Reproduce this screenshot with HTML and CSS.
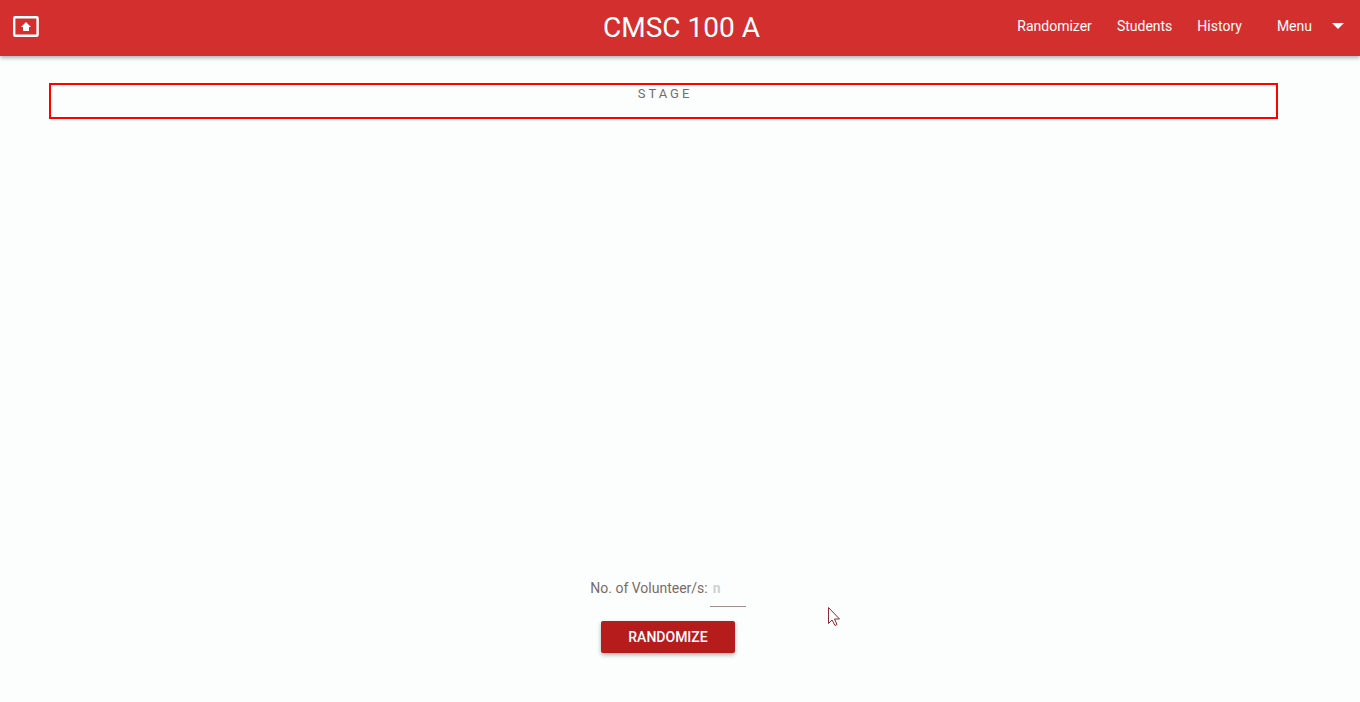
FILE: index.html
```html
<!DOCTYPE html>
<html lang="en">
<head>
<meta charset="utf-8">
<title>CMSC 100 A</title>
<link rel="stylesheet" href="styles.css">
</head>
<body>
<header class="navbar">
  <a class="home" href="#" aria-label="Open in browser">
    <svg width="30" height="30" viewBox="0 0 30 30" aria-hidden="true">
      <rect x="3.200" y="4.300" width="23.400" height="18.500" rx="1" fill="none" stroke="#fff" stroke-width="2.400"/>
      <path d="M15 9l5 5h-2v4h-6v-4h-2z" fill="#fff"/>
    </svg>
  </a>
  <h1 class="title">CMSC 100 A</h1>
  <nav class="links">
    <a href="#">Randomizer</a>
    <a href="#">Students</a>
    <a href="#">History</a>
    <button class="menu" type="button">Menu
      <svg width="12" height="6" viewBox="0 0 12 6" aria-hidden="true"><path d="M0 0h12L6 6z" fill="#fff"/></svg>
    </button>
  </nav>
</header>
<main class="content">
  <section class="stage">STAGE</section>
  <form class="picker">
    <div class="field">
      <label for="count">No. of Volunteer/s:</label>
      <input id="count" type="text" placeholder="n">
    </div>
    <button class="randomize" type="button">RANDOMIZE</button>
  </form>
</main>
<svg class="cursor" width="14" height="21" viewBox="0 0 14 21" aria-hidden="true"><path d="M1.500 1.500v16l3.500-3.500 3 5.500 2-1-2.500-5.500h5z" fill="#fff" stroke="#8c2a35"/></svg>
</body>
</html>
```
FILE: styles.css
```css
* {
  box-sizing: border-box;
}

body {
  margin: 0;
  min-height: 100vh;
  display: flex;
  flex-direction: column;
  background: #fcfefd;
  color: #796b6b;
  font: 14px/20px Roboto, sans-serif;
}

.navbar {
  display: grid;
  grid-template-columns: 1fr auto 1fr;
  align-items: center;
  height: 56px;
  padding: 0 16px 0 11px;
  background: #d32f2f;
  color: #fff;
  box-shadow: 0 2px 4px rgba(0, 0, 0, 0.3);
}

.home {
  display: flex;
  justify-self: start;
}

.title {
  margin: 0;
  padding-left: 8px;
  font-size: 28px;
  font-weight: 400;
  line-height: 56px;
}

.links {
  display: flex;
  justify-content: flex-end;
  gap: 25px;
  padding-bottom: 4px;
}

.links a,
.menu {
  color: #fff;
  font: inherit;
  text-decoration: none;
}

.menu {
  display: flex;
  align-items: center;
  gap: 20px;
  margin-left: 10px;
  padding: 0;
  border: 0;
  background: none;
}

.content {
  flex: 1;
  display: flex;
  flex-direction: column;
  justify-content: space-between;
  padding: 27px 82px 49px 49px;
}

.stage {
  height: 36px;
  padding-left: 3px;
  border: 2px solid #f00;
  font-size: 13px;
  line-height: 18px;
  letter-spacing: 3px;
  text-align: center;
}

.picker {
  display: flex;
  flex-direction: column;
  align-items: center;
  gap: 14px;
  padding-left: 9px;
}

.field {
  display: flex;
  gap: 2px;
}

.field input {
  width: 36px;
  height: 29px;
  padding: 0 3px 9px;
  border: 0;
  border-bottom: 1px solid #a09090;
  background: none;
  color: #796b6b;
  font: inherit;
}

.field input::placeholder {
  color: #d0d0d0;
  font-weight: 700;
  opacity: 1;
}

.randomize {
  width: 134px;
  height: 32px;
  padding: 0;
  border: 0;
  border-radius: 2px;
  background: #b71c1c;
  color: #fff;
  font: 500 14px/32px Roboto, sans-serif;
  box-shadow: 0 2px 4px rgba(0, 0, 0, 0.3);
}

.cursor {
  position: absolute;
  left: 827px;
  top: 606px;
}
```
